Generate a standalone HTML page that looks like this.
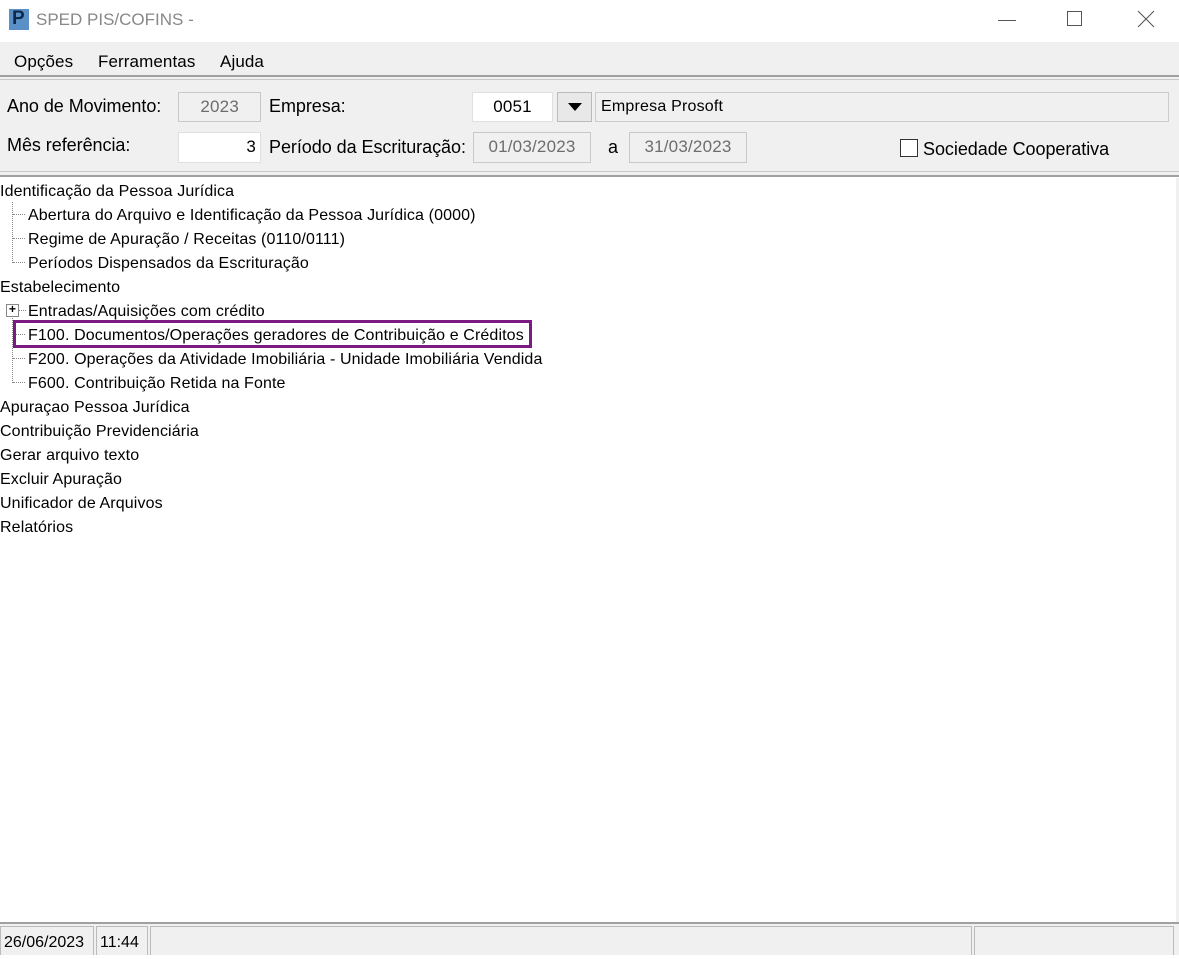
<!DOCTYPE html>
<html><head><meta charset="utf-8"><style>
*{margin:0;padding:0;box-sizing:border-box}
body{width:1179px;height:955px;position:relative;background:#fff;font-family:"Liberation Sans","DejaVu Sans",sans-serif;color:#000;overflow:hidden}
.a{position:absolute;white-space:nowrap}
.f{font-size:18px;letter-spacing:-.05px}
.m{font-size:17px;letter-spacing:.1px}
.box{position:absolute;border:1px solid #c8c8c8;background:#f0f0f0;color:#6d6d6d;font-size:17px;letter-spacing:.2px;line-height:28px}
.w{background:#fff;color:#000}
.t{position:absolute;font-size:16px;letter-spacing:.12px;line-height:24px;white-space:nowrap;left:0}
.vl{position:absolute;border-left:1px dotted #888;width:0}
.hl{position:absolute;border-top:1px dotted #888;height:0;width:12px}
</style></head><body>
<div class="a" style="left:0;top:0;width:1179px;height:42px;background:#fff"></div>
<div class="a" style="left:9px;top:9px;width:20px;height:21px;background:#5b8fc7"></div>
<div class="a" style="left:12px;top:8px;font:bold 19px 'Liberation Sans',sans-serif;color:#0d2a4a">P</div>
<div class="a" style="left:36px;top:10px;font-size:17px;color:#888">SPED PIS/COFINS -</div>
<div class="a" style="left:998px;top:20px;width:18px;border-top:1px solid #555"></div>
<div class="a" style="left:1067px;top:11px;width:15px;height:15px;border:1px solid #555"></div>
<svg class="a" style="left:1137px;top:10px" width="18" height="18"><path d="M1 1L17 17M17 1L1 17" stroke="#555" stroke-width="1"/></svg>
<div class="a" style="left:0;top:42px;width:1179px;height:34px;background:#f0f0f0"></div>
<div class="a m" style="left:14px;top:52px">Opções</div>
<div class="a m" style="left:98px;top:52px">Ferramentas</div>
<div class="a m" style="left:220px;top:52px">Ajuda</div>
<div class="a" style="left:0;top:75px;width:1179px;height:102px;background:#f0f0f0;border-top:2px solid #a0a0a0;border-bottom:2px solid #a0a0a0"></div>
<div class="a" style="left:0;top:79px;width:1179px;border-top:1px solid #c8c8c8"></div>
<div class="a" style="left:0;top:171px;width:1179px;border-top:1px solid #c8c8c8"></div>
<div class="a f" style="left:7px;top:96px">Ano de Movimento:</div>
<div class="box" style="left:178px;top:92px;width:83px;height:30px;text-align:right;padding-right:21px">2023</div>
<div class="a f" style="left:269px;top:96px">Empresa:</div>
<div class="box w" style="left:472px;top:92px;width:81px;height:30px;text-align:center;border-color:#e0e0e0">0051</div>
<div class="box" style="left:557px;top:92px;width:35px;height:30px;background:#e8e8e8;border-color:#bbb"></div>
<div class="a" style="left:568px;top:103px;border-left:7px solid transparent;border-right:7px solid transparent;border-top:8px solid #000"></div>
<div class="box" style="left:595px;top:92px;width:574px;height:30px;color:#000;padding-left:5px;border-color:#ccc;font-size:16px">Empresa Prosoft</div>
<div class="a f" style="left:7px;top:135px">Mês referência:</div>
<div class="box w" style="left:178px;top:132px;width:83px;height:31px;text-align:right;padding-right:4px;border-color:#e0e0e0">3</div>
<div class="a f" style="left:269px;top:137px">Período da Escrituração:</div>
<div class="box" style="left:473px;top:132px;width:118px;height:31px;text-align:center">01/03/2023</div>
<div class="a f" style="left:608px;top:137px">a</div>
<div class="box" style="left:629px;top:132px;width:118px;height:31px;text-align:center">31/03/2023</div>
<div class="a" style="left:900px;top:139px;width:18px;height:18px;border:1px solid #333;background:#fff"></div>
<div class="a f" style="left:923px;top:139px">Sociedade Cooperativa</div>

<div class="t" style="top:180px">Identificação da Pessoa Jurídica</div>
<div class="t" style="top:204px;left:28px">Abertura do Arquivo e Identificação da Pessoa Jurídica (0000)</div>
<div class="t" style="top:228px;left:28px">Regime de Apuração / Receitas (0110/0111)</div>
<div class="t" style="top:252px;left:28px">Períodos Dispensados da Escrituração</div>
<div class="vl" style="left:12px;top:202px;height:61px"></div>
<div class="hl" style="left:13px;top:214px"></div>
<div class="hl" style="left:13px;top:238px"></div>
<div class="hl" style="left:13px;top:262px"></div>
<div class="t" style="top:276px">Estabelecimento</div>
<div class="t" style="top:300px;left:28px">Entradas/Aquisições com crédito</div>
<div class="t" style="top:324px;left:28px">F100. Documentos/Operações geradores de Contribuição e Créditos</div>
<div class="t" style="top:348px;left:28px">F200. Operações da Atividade Imobiliária - Unidade Imobiliária Vendida</div>
<div class="t" style="top:372px;left:28px">F600. Contribuição Retida na Fonte</div>
<div class="vl" style="left:12px;top:316px;height:67px"></div>
<div class="hl" style="left:19px;top:310px;width:7px"></div>
<div class="hl" style="left:13px;top:334px"></div>
<div class="hl" style="left:13px;top:358px"></div>
<div class="hl" style="left:13px;top:382px"></div>
<div class="a" style="left:6px;top:304px;width:13px;height:13px;border:1px solid #888;background:#fff;font:bold 12px/10px 'Liberation Mono',monospace;text-align:center">+</div>
<div class="a" style="left:13px;top:320px;width:519px;height:28px;border:3px solid #7a1a82"></div>
<div class="t" style="top:396px">Apuraçao Pessoa Jurídica</div>
<div class="t" style="top:420px">Contribuição Previdenciária</div>
<div class="t" style="top:444px">Gerar arquivo texto</div>
<div class="t" style="top:468px">Excluir Apuração</div>
<div class="t" style="top:492px">Unificador de Arquivos</div>
<div class="t" style="top:516px">Relatórios</div>
<div class="a" style="left:1176px;top:178px;width:3px;height:746px;background:#f0f0f0"></div>

<div class="a" style="left:0;top:922px;width:1179px;height:33px;background:#f0f0f0;border-top:2px solid #a0a0a0"></div>
<div class="a" style="left:0;top:926px;width:94px;height:29px;border:1px solid #bbb;border-bottom:0;font-size:16px;line-height:32px;padding-left:3px">26/06/2023</div>
<div class="a" style="left:96px;top:926px;width:52px;height:29px;border:1px solid #bbb;border-bottom:0;font-size:16px;line-height:32px;padding-left:3px">11:44</div>
<div class="a" style="left:150px;top:926px;width:822px;height:29px;border:1px solid #bbb;border-bottom:0"></div>
<div class="a" style="left:974px;top:926px;width:200px;height:29px;border:1px solid #bbb;border-bottom:0"></div>
</body></html>
